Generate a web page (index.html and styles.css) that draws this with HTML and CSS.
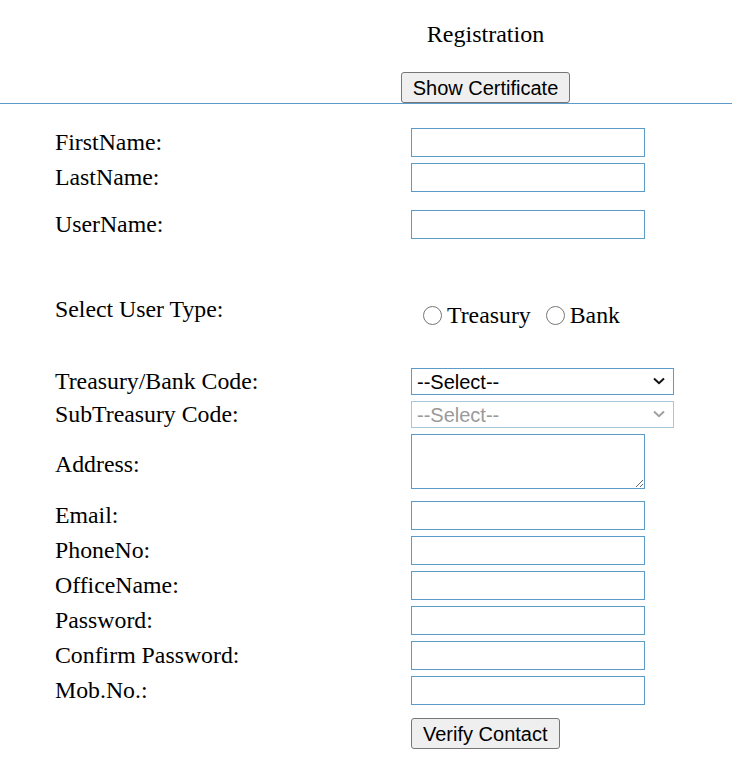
FILE: index.html
```html
<!DOCTYPE html>
<html>
<head>
<meta charset="utf-8">
<title>Registration</title>
<link rel="stylesheet" href="styles.css">
</head>
<body>
<header class="head">
  <div class="head-inner">
    <div class="title">Registration</div>
    <button class="btn" type="button">Show Certificate</button>
  </div>
</header>
<div class="rule"></div>
<form class="form">
  <div class="row"><label class="lbl">FirstName:</label><input class="txt" type="text"></div>
  <div class="row"><label class="lbl">LastName:</label><input class="txt" type="text"></div>
  <div class="row r-user"><label class="lbl">UserName:</label><input class="txt" type="text"></div>
  <div class="row r-type">
    <label class="lbl">Select User Type:</label>
    <div class="radios">
      <label class="opt"><input class="rad" type="radio" name="ut">Treasury</label>
      <label class="opt"><input class="rad" type="radio" name="ut">Bank</label>
    </div>
  </div>
  <div class="row r-code">
    <label class="lbl">Treasury/Bank Code:</label>
    <span class="selwrap">
      <select class="sel"><option>--Select--</option></select>
      <svg class="chev" width="12" height="8" viewBox="0 0 12 8"><path d="M1 1.5 L6 6.2 L11 1.5" fill="none" stroke="#111" stroke-width="2"/></svg>
    </span>
  </div>
  <div class="row">
    <label class="lbl">SubTreasury Code:</label>
    <span class="selwrap">
      <select class="sel" disabled><option>--Select--</option></select>
      <svg class="chev" width="12" height="8" viewBox="0 0 12 8"><path d="M1 1.5 L6 6.2 L11 1.5" fill="none" stroke="#a0a0a0" stroke-width="2"/></svg>
    </span>
  </div>
  <div class="row r-addr"><label class="lbl">Address:</label><textarea class="area"></textarea></div>
  <div class="row r-email"><label class="lbl">Email:</label><input class="txt" type="text"></div>
  <div class="row"><label class="lbl">PhoneNo:</label><input class="txt" type="text"></div>
  <div class="row"><label class="lbl">OfficeName:</label><input class="txt" type="text"></div>
  <div class="row"><label class="lbl">Password:</label><input class="txt" type="password"></div>
  <div class="row"><label class="lbl">Confirm Password:</label><input class="txt" type="password"></div>
  <div class="row"><label class="lbl">Mob.No.:</label><input class="txt" type="text"></div>
  <div class="row r-verify"><span class="lbl"></span><button class="btn" type="button">Verify Contact</button></div>
</form>
</body>
</html>
```
FILE: styles.css
```css
html, body {
  margin: 0;
  padding: 0;
  background: #ffffff;
  color: #000000;
  font-family: "Liberation Serif", "Times New Roman", serif;
}
.head-inner {
  margin-left: 239px;
  display: flex;
  flex-direction: column;
  align-items: center;
  padding-top: 20px;
}
.rule {
  height: 1px;
  background: #5b9bc8;
}
.title {
  font-size: 24px;
  line-height: 28px;
  margin-bottom: 24px;
}
.btn {
  font-family: "Liberation Sans", Arial, sans-serif;
  font-size: 20px;
  height: 31px;
  padding: 0 11px;
  background: #efefef;
  border: 1px solid #767676;
  border-radius: 3px;
  color: #000;
  line-height: 1;
  display: block;
}
.form {
  padding: 24px 0 20px 55px;
  display: flex;
  flex-direction: column;
  gap: 6px;
}
.row {
  display: flex;
  align-items: center;
}
.lbl {
  width: 356px;
  flex: none;
  font-size: 23.8px;
  line-height: 27px;
}
.txt {
  box-sizing: border-box;
  width: 234px;
  height: 29px;
  margin: 0;
  border: 1px solid #5b9bc8;
  padding: 0 3px;
  font-family: "Liberation Sans", Arial, sans-serif;
  font-size: 18px;
}
.r-user { margin-top: 12px; }
.r-type {
  margin-top: 51px;
  align-items: flex-start;
}
.radios {
  display: flex;
  align-items: center;
  padding-top: 6px;
  padding-left: 11px;
  font-size: 23.8px;
  line-height: 27px;
}
.opt {
  display: flex;
  align-items: center;
  margin-right: 14px;
}
.rad {
  width: 19px;
  height: 19px;
  margin: 0 5px 0 1px;
}
.r-code { margin-top: 33px; }
.selwrap {
  position: relative;
  display: block;
  width: 263px;
  height: 27px;
}
.sel {
  -webkit-appearance: none;
  appearance: none;
  box-sizing: border-box;
  display: block;
  width: 263px;
  height: 27px;
  margin: 0;
  border: 1px solid #5b9bc8;
  border-radius: 0;
  background: #fff;
  font-family: "Liberation Sans", Arial, sans-serif;
  font-size: 20px;
  padding: 0 24px 0 5px;
  color: #000;
}
.sel:disabled {
  border-color: #a9c5d8;
  color: #9a9a9a;
  background: #fff;
  opacity: 1;
}
.chev {
  position: absolute;
  right: 9px;
  top: 9px;
  pointer-events: none;
}
.area {
  box-sizing: border-box;
  width: 234px;
  height: 55px;
  margin: 0;
  border: 1px solid #5b9bc8;
  font-family: "Liberation Sans", Arial, sans-serif;
}
.r-addr .lbl { padding-top: 6px; }
.r-email { margin-top: 6px; }
.r-verify { margin-top: 7px; }
```
